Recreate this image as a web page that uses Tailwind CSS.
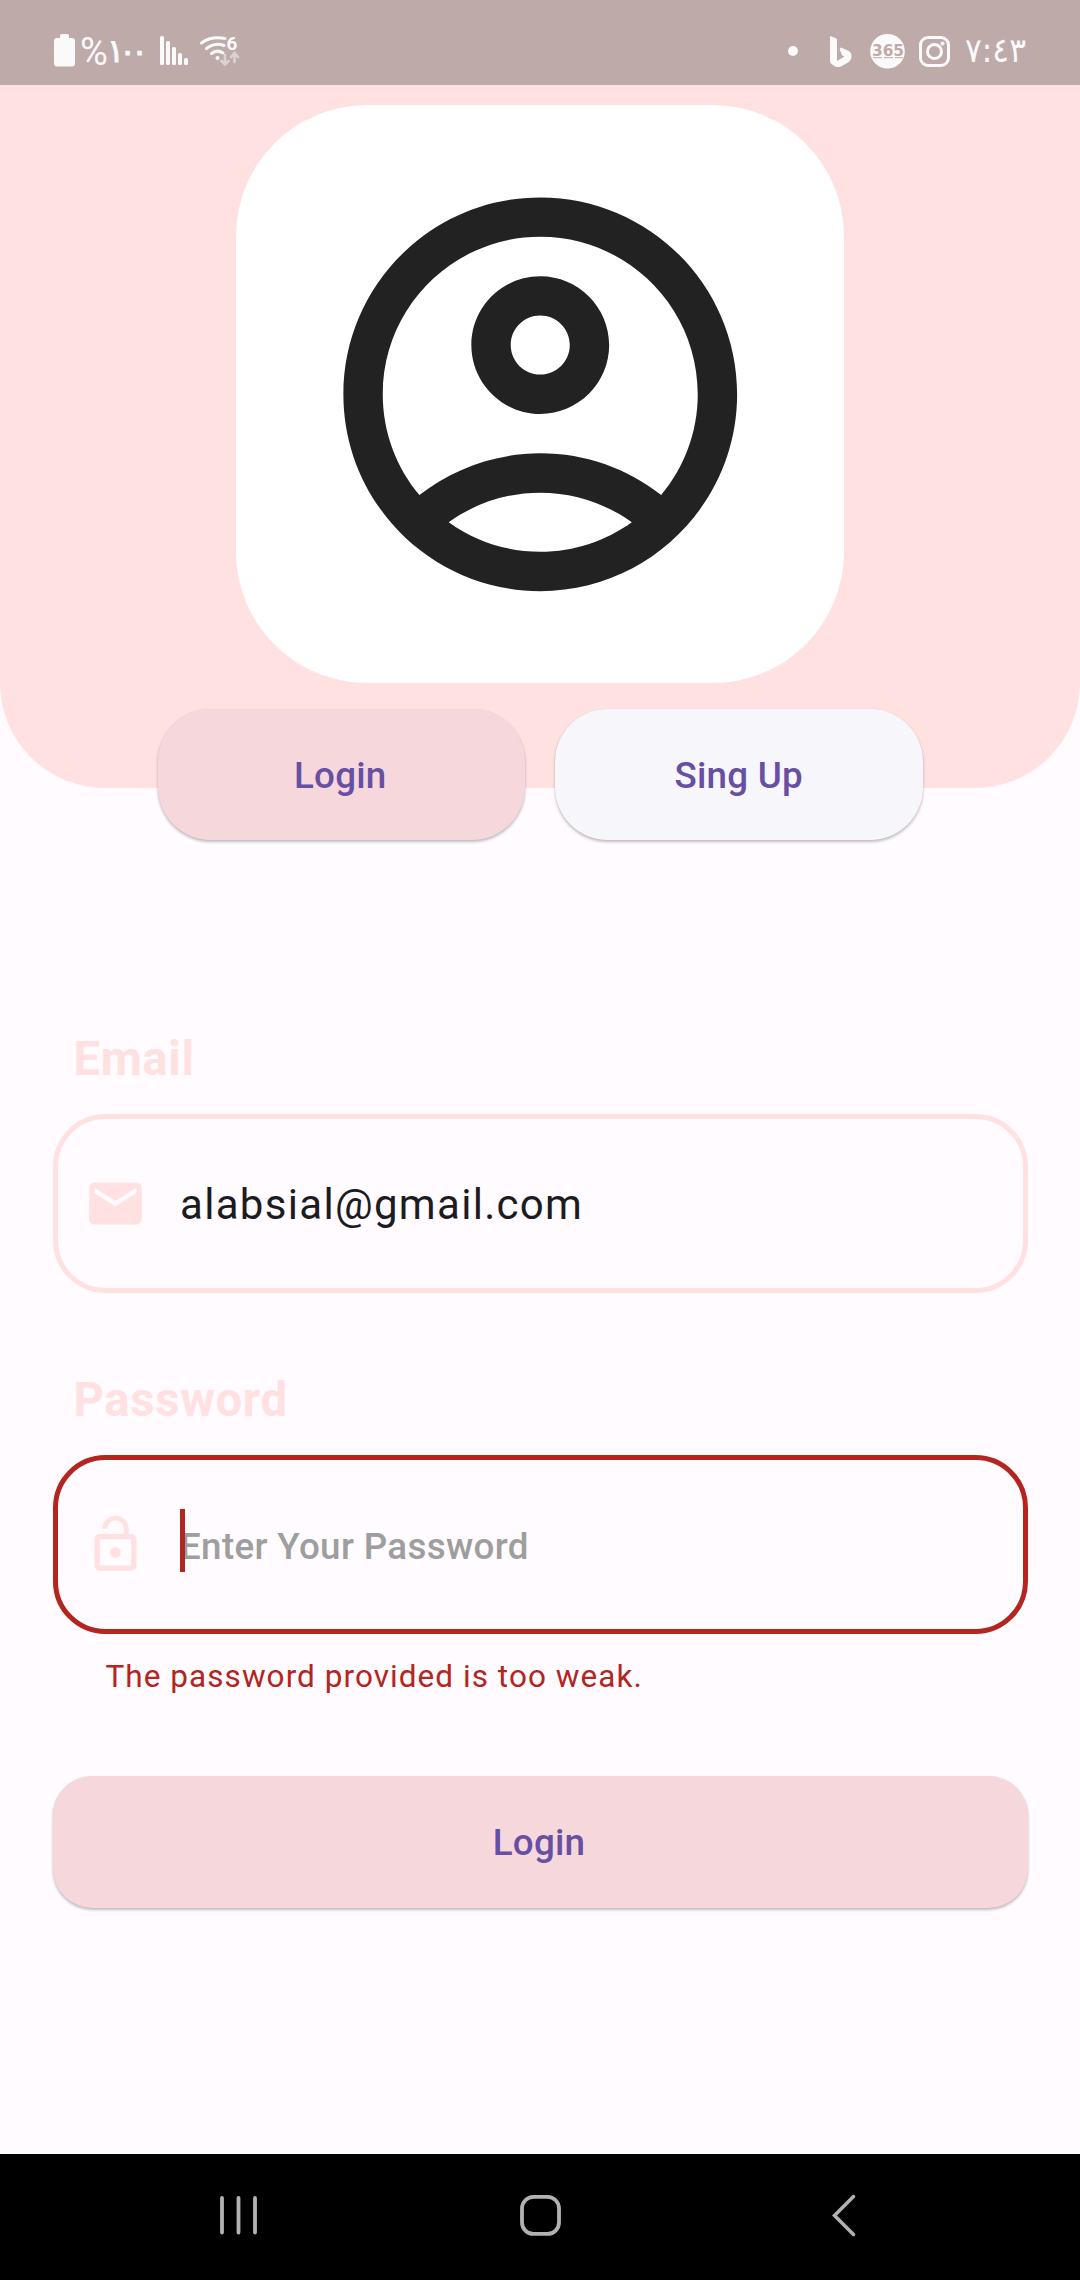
<!DOCTYPE html>
<html lang="en">
<head>
<meta charset="utf-8">
<title>Login</title>
<script src="https://cdn.jsdelivr.net/npm/@tailwindcss/browser@4"></script>
</head>
<body class="w-[1080px] h-[2280px] overflow-hidden bg-[#fffbff] font-[Roboto,sans-serif] flex flex-col">
  <!-- Header panel with status bar and avatar -->
  <header class="h-[787.5px] shrink-0 rounded-b-[105px] bg-[#ffe1e1]">
    <div class="h-[85px] bg-[#bfaaaa] flex items-start text-[#fafafa]">
      <svg class="ml-[54px] mt-[34px] w-[21px] h-[33px] shrink-0" viewBox="0 0 21 33" fill="currentColor"><path d="M6 2Q6 0 8 0H13Q15 0 15 2V4H18Q21 4 21 7V29Q21 32.500 18 32.500H3Q0 32.500 0 29V7Q0 4 3 4H6Z"/></svg>
      <span class="ml-[5px] mt-[30px] w-[29px] text-[38px] leading-[44px]">%</span>
      <svg class="mt-[30px] w-[42px] h-[40px] shrink-0 overflow-visible" viewBox="0 0 42 40"><text x="-2 10 22" y="32" font-size="32" font-family="DejaVu Sans" fill="currentColor" stroke="currentColor" stroke-width="0.900">١٠٠</text></svg>
      <svg class="ml-[8px] mt-[35px] w-[30px] h-[31px] shrink-0" viewBox="0 0 30 31" fill="currentColor"><rect x="1" y="1" width="4" height="29" rx="1.500"/><rect x="7" y="6" width="4" height="24" rx="1.500"/><rect x="13" y="12" width="4" height="18" rx="1.500"/><rect x="19" y="18" width="4" height="12" rx="1.500"/><rect x="25" y="23" width="4" height="7" rx="1.500"/></svg>
      <svg class="ml-[10px] mt-[33px] w-[42px] h-[36px] shrink-0 overflow-visible" viewBox="0 0 42 36" fill="none" stroke="currentColor" stroke-width="3" stroke-linecap="round">
        <path d="M2.500 10Q12 3 26 5.500M7.500 15.500Q16 9 25 12.500M12.500 20.500Q18 16 24 20"/>
        <circle cx="18.500" cy="25" r="2" fill="currentColor" stroke="none"/>
        <text x="27.500" y="17" font-size="19" font-weight="700" fill="currentColor" stroke="none">6</text>
        <path d="M26 22V31M22.500 28L26 31.500L29.500 28M35.500 29V20.500M32 24L35.500 20L39 24" stroke="#ddd2d2" stroke-width="2.600"/>
      </svg>
      <svg class="ml-[547px] mt-[46px] w-[10px] h-[10px] shrink-0" viewBox="0 0 10 10" fill="currentColor"><circle cx="5" cy="5" r="5"/></svg>
      <svg class="ml-[32px] mt-[36px] w-[22px] h-[31px] shrink-0" viewBox="0 0 22 31" fill="currentColor"><path d="M0 0L5.500 2Q7 2.500 7 4V25L14.500 20.500L12 19.300L9.800 13.500Q9.500 11.500 11.500 11.800L18 14.500Q21.500 16 21.500 20Q21.500 24 18 26.500L11 30.500Q8 31.800 5 30.500L1.500 28Q0 27 0 25Z"/></svg>
      <svg class="ml-[18px] mt-[34px] w-[36px] h-[36px] shrink-0" viewBox="0 0 36 36"><circle cx="17.500" cy="17.300" r="17.300" fill="#fafafa"/><text x="2" y="21.500" font-size="15" font-weight="700" font-family="DejaVu Sans" textLength="32" lengthAdjust="spacingAndGlyphs" fill="#bfaaaa">365</text><path d="M3 23.700H12M14 23.700H23M25 23.700H33" stroke="#bfaaaa" stroke-width="1"/></svg>
      <svg class="ml-[13px] mt-[36px] w-[31px] h-[31px] shrink-0" viewBox="0 0 31 31" fill="none" stroke="currentColor" stroke-width="3"><rect x="1.500" y="1.500" width="28" height="28" rx="7.500"/><circle cx="15.500" cy="15.500" r="7"/><circle cx="23.500" cy="7.500" r="2" fill="currentColor" stroke="none"/></svg>
      <svg class="ml-[15px] mt-[29px] w-[61px] h-[40px] shrink-0 overflow-visible" viewBox="0 0 61 40"><text x="0" y="33" font-size="34" font-family="DejaVu Sans" textLength="61" lengthAdjust="spacingAndGlyphs" fill="currentColor">٧:٤٣</text></svg>
    </div>
    <div class="mx-auto mt-[20px] w-[607.5px] h-[577.5px] rounded-[131.25px] bg-white flex items-center justify-center">
      <svg class="w-[472.5px] h-[472.5px]" viewBox="0 0 24 24" fill="#222222"><path d="M12 2C6.480 2 2 6.480 2 12s4.480 10 10 10 10-4.480 10-10S17.520 2 12 2zM7.350 18.500C8.660 17.560 10.260 17 12 17s3.340.56 4.650 1.500C15.340 19.440 13.740 20 12 20s-3.340-.56-4.650-1.500zm10.790-1.380C16.450 15.800 14.320 15 12 15s-4.450.8-6.140 2.120C4.700 15.730 4 13.950 4 12c0-4.420 3.580-8 8-8s8 3.580 8 8c0 1.950-.7 3.730-1.860 5.120z"/><path d="M12 6c-1.930 0-3.500 1.570-3.500 3.500S10.070 13 12 13s3.500-1.570 3.500-3.500S13.930 6 12 6zm0 5c-.83 0-1.500-.67-1.500-1.500S11.170 8 12 8s1.500.67 1.500 1.500S12.830 11 12 11z"/></svg>
    </div>
  </header>

  <!-- Mode switch, overlapping the header edge -->
  <div class="-mt-[79px] flex justify-center gap-[30px] shrink-0 text-[36.75px] font-medium tracking-[0.26px] text-[#6750a4]">
    <button class="w-[367.5px] h-[131.5px] pt-[2px] pr-[2px] rounded-[52.5px] bg-[#f6d8dc] shadow-[0_2px_3px_rgba(0,0,0,0.25),0_0_1px_rgba(0,0,0,0.08)]">Login</button>
    <button class="w-[367.5px] h-[131.5px] pt-[2px] rounded-[52.5px] bg-[#f6f6fb] shadow-[0_2px_3px_rgba(0,0,0,0.25),0_0_1px_rgba(0,0,0,0.08)]">Sing Up</button>
  </div>

  <main class="mt-[190px] px-[52.5px] flex flex-col">
    <label class="pl-[21px] h-[56px] leading-[58px] text-[47.25px] font-bold tracking-[0.66px] text-[#ffe1e1]">Email</label>
    <div class="mt-[28px] h-[179px] rounded-[52.5px] border-[5px] border-[#ffe1e1] flex items-center pl-[26.5px]">
      <svg class="w-[63px] h-[63px] shrink-0" viewBox="0 0 24 24" fill="#ffe1e1"><path d="M20 4H4c-1.100 0-1.990.9-1.990 2L2 18c0 1.100.9 2 2 2h16c1.100 0 2-.9 2-2V6c0-1.100-.9-2-2-2zm0 4l-8 5-8-5V6l8 5 8-5v2z"/></svg>
      <span class="ml-[33px] pt-[2px] text-[42px] leading-[63px] tracking-[1.31px] text-[#1c1b1f]">alabsial@gmail.com</span>
    </div>

    <label class="mt-[78px] pl-[21px] h-[56px] leading-[58px] text-[47.25px] font-bold tracking-[0.66px] text-[#ffe1e1]">Password</label>
    <div class="mt-[28px] h-[179px] rounded-[52.5px] border-[5px] border-[#b3251e] flex items-center pl-[26.5px]">
      <svg class="w-[63px] h-[63px] shrink-0" viewBox="0 0 24 24" fill="#ffe1e1"><path d="M12 17c1.100 0 2-.9 2-2s-.9-2-2-2-2 .9-2 2 .9 2 2 2zm6-9h-1V6c0-2.760-2.240-5-5-5S7 3.240 7 6h1.900c0-1.710 1.390-3.100 3.100-3.100s3.100 1.390 3.100 3.100v2H6c-1.100 0-2 .9-2 2v10c0 1.100.9 2 2 2h12c1.100 0 2-.9 2-2V10c0-1.100-.9-2-2-2zm0 12H6V10h12v10z"/></svg>
      <div class="relative ml-[33px] h-[63px] flex items-center">
        <span class="pt-[3px] text-[36.75px] leading-[63px] font-medium text-[#9e9e9e] tracking-[0.34px]">Enter Your Password</span>
        <span class="absolute left-0 -top-[4px] w-[5px] h-[63px] bg-[#b3251e]"></span>
      </div>
    </div>
    <p class="mt-[21px] pl-[53px] h-[42px] leading-[44px] text-[31.5px] tracking-[1.05px] text-[#b3251e]">The password provided is too weak.</p>

    <button class="mt-[79px] h-[131.5px] pt-[2px] pr-[2px] rounded-[39.4px] bg-[#f6d8dc] text-[36.75px] font-medium tracking-[0.26px] text-[#6750a4] shadow-[0_2px_3px_rgba(0,0,0,0.25),0_0_1px_rgba(0,0,0,0.08)]">Login</button>
  </main>

  <!-- System navigation -->
  <nav class="mt-auto h-[126px] shrink-0 bg-black flex items-start pl-[218px] pt-[40px]">
    <svg class="w-[42px] h-[44px]" viewBox="0 0 42 44" fill="none" stroke="#b2b2b2" stroke-width="3.800" stroke-linecap="round"><path d="M4 4V38.500M20.500 4V38.500M37 4V38.500"/></svg>
    <svg class="ml-[258px] w-[44px] h-[44px]" viewBox="0 0 44 44" fill="none" stroke="#b2b2b2" stroke-width="3.800"><rect x="4" y="2.900" width="37" height="37" rx="11.500"/></svg>
    <svg class="ml-[268px] w-[28px] h-[44px]" viewBox="0 0 28 44" fill="none" stroke="#b2b2b2" stroke-width="3.500" stroke-linecap="round"><path d="M23.500 2.500L4.500 21.500L23.500 40.500"/></svg>
  </nav>
</body>
</html>
